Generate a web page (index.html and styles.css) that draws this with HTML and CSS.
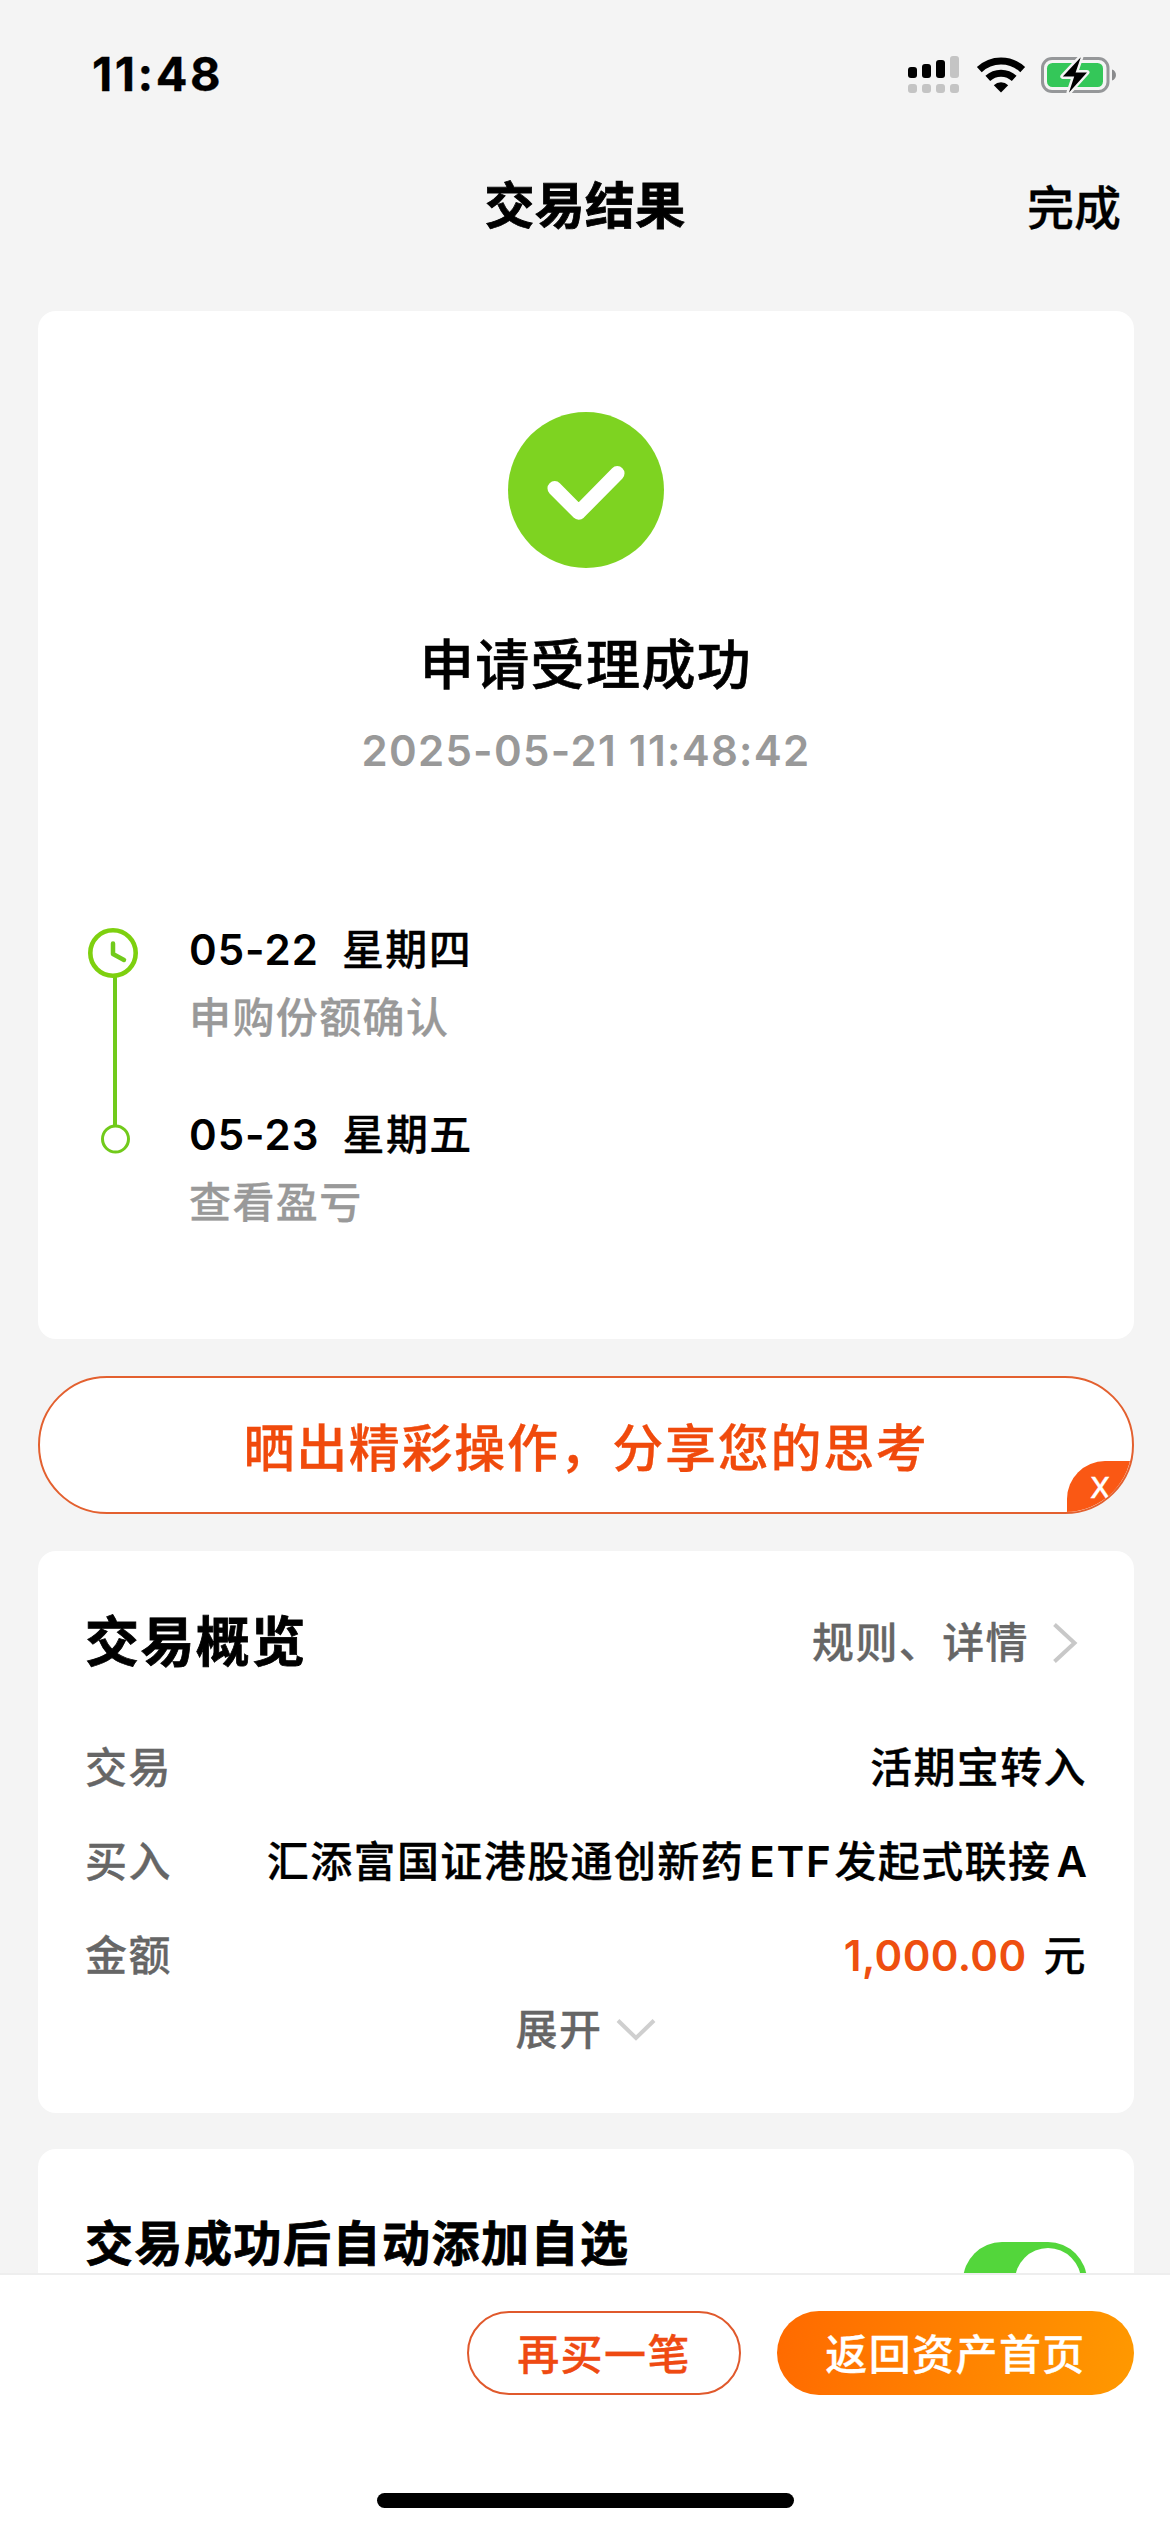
FILE: index.html
```html
<!DOCTYPE html>
<html lang="zh-CN">
<head>
<meta charset="utf-8">
<title>交易结果</title>
<link rel="stylesheet" href="styles.css">
</head>
<body>
<div class="screen">
  <header class="status-bar">
    <span class="clock">11:48</span>
    <div class="status-icons">
      <svg class="signal" width="52" height="38" viewBox="0 0 52 38">
        <g fill="#000"><rect x="0" y="11" width="9" height="11" rx="3"/><rect x="14" y="8" width="9" height="14" rx="3"/><rect x="28" y="4" width="9" height="18" rx="3"/></g>
        <g fill="#c4c4c4"><rect x="42" y="0" width="9" height="22" rx="3"/><rect x="0" y="28" width="9" height="9" rx="3"/><rect x="14" y="28" width="9" height="9" rx="3"/><rect x="28" y="28" width="9" height="9" rx="3"/><rect x="42" y="28" width="9" height="9" rx="3"/></g>
      </svg>
      <svg class="wifi" width="50" height="38" viewBox="0 0 50 38">
        <g fill="none" stroke="#000" stroke-width="7"><path d="M3.3 13.6a31.500 31.500 0 0 1 43.400 0"/><path d="M11.800 22.300a19.500 19.500 0 0 1 26.400 0"/></g>
        <path d="M25 36.500l-7.200-7.300a10.500 10.500 0 0 1 14.400 0z"/>
      </svg>
      <svg class="battery" width="76" height="40" viewBox="0 0 76 40">
        <rect x="1.500" y="3.500" width="65.500" height="33" rx="9.500" fill="none" stroke="#959799" stroke-width="3"/>
        <rect x="6" y="8" width="56" height="24" rx="5.500" fill="#34c759"/>
        <path d="M71 14.500c5.300 1.500 5.300 9.500 0 11z" fill="#8a8b8d"/>
        <path d="M39.800 2.200L21.800 21.500h11.400L28 37.400l18-20H34.600z" fill="#000" stroke="#f4f4f4" stroke-width="5" stroke-linejoin="round" paint-order="stroke"/>
      </svg>
    </div>
  </header>
  <nav class="nav-bar">
    <h1 class="nav-title">交易结果</h1>
    <a class="nav-done">完成</a>
  </nav>
  <main class="content">
    <section class="card result">
      <svg class="result-icon" width="156" height="156" viewBox="0 0 156 156">
        <circle cx="78" cy="78" r="78" fill="#7ed321"/>
        <path d="M46.700 76.300L70.700 100.500L109.300 61.300" fill="none" stroke="#fff" stroke-width="14.500" stroke-linecap="round" stroke-linejoin="round"/>
      </svg>
      <h2 class="result-title">申请受理成功</h2>
      <p class="result-time">2025-05-21 11:48:42</p>
      <div class="timeline">
        <svg class="timeline-rail" width="50" height="226" viewBox="0 0 50 226">
          <g fill="none" stroke="#71ca1b">
            <path d="M27 49V197" stroke-width="4"/>
            <circle cx="25" cy="25" r="22.700" stroke="#7ed00f" stroke-width="4.600"/>
            <path d="M25 15.500V26L36 32" stroke-width="4.500" stroke-linecap="round" stroke-linejoin="round"/>
            <circle cx="27.500" cy="211" r="13" stroke-width="3"/>
          </g>
        </svg>
        <ol class="steps">
          <li class="step"><div class="step-date"><span class="num">05-22</span><span>星期四</span></div><div class="step-note">申购份额确认</div></li>
          <li class="step"><div class="step-date"><span class="num">05-23</span><span>星期五</span></div><div class="step-note">查看盈亏</div></li>
        </ol>
      </div>
    </section>
    <div class="share">
      <span class="share-text">晒出精彩操作，分享您的思考</span>
      <span class="share-close">X</span>
    </div>
    <section class="card overview">
      <div class="overview-head">
        <h2 class="overview-title">交易概览</h2>
        <a class="overview-link">规则、详情
          <svg width="26" height="42" viewBox="0 0 26 42"><path d="M2.500 2.500L22.500 21L2.500 39.500" fill="none" stroke="#c8c8c8" stroke-width="4"/></svg>
        </a>
      </div>
      <dl class="rows">
        <div class="row"><dt>交易</dt><dd>活期宝转入</dd></div>
        <div class="row"><dt>买入</dt><dd class="fund">汇添富国证港股通创新药<span class="latin">ETF</span>发起式联接<span class="latin-end">A</span></dd></div>
        <div class="row"><dt>金额</dt><dd class="amount"><span class="amount-value">1,000.00</span><span>元</span></dd></div>
      </dl>
      <div class="expand">展开
        <svg width="40" height="24" viewBox="0 0 40 24"><path d="M2 2.500L20 20L38 2.500" fill="none" stroke="#cfcfcf" stroke-width="4"/></svg>
      </div>
    </section>
    <section class="card favorite">
      <h2 class="favorite-title">交易成功后自动添加自选</h2>
      <span class="toggle"><span class="knob"></span></span>
    </section>
  </main>
  <footer class="footer">
    <div class="actions">
      <button class="btn btn-outline">再买一笔</button>
      <button class="btn btn-primary">返回资产首页</button>
    </div>
    <div class="home-indicator"></div>
  </footer>
</div>
</body>
</html>
```
FILE: styles.css
```css
* { box-sizing: border-box; margin: 0; padding: 0; }
body {
  background: #f4f4f4;
  color: #000;
  font-family: Inter, "Noto Sans CJK SC", sans-serif;
  font-size: 42px;
  font-weight: 500;
  letter-spacing: 1.4px;
  line-height: 60px;
  -webkit-text-stroke: 0.3px;
}
.screen { width: 1170px; height: 2532px; display: flex; flex-direction: column; overflow: hidden; }

.status-bar { height: 148px; flex: none; display: flex; justify-content: space-between; align-items: center; padding: 0 53px 0 92px; }
.clock { font-size: 47px; font-weight: 700; letter-spacing: 2.5px; }
.status-icons { display: flex; align-items: center; padding-top: 1px; }
.wifi { margin-left: 16px; }
.battery { margin-left: 15px; }

.nav-bar { height: 163px; flex: none; display: grid; grid-template-columns: 1fr auto 1fr; align-items: start; padding: 28px 49px 0; }
.nav-title { grid-column: 2; font-size: 50px; font-weight: 700; letter-spacing: 0.3px; -webkit-text-stroke: 0.8px; }
.nav-done { justify-self: end; font-size: 47px; letter-spacing: 0; padding-top: 2px; }

.content { flex: 1; min-height: 0; overflow: hidden; padding: 0 36px 0 38px; display: flex; flex-direction: column; }
.card { background: #fff; border-radius: 18px; flex: none; }

.result { height: 1028px; padding: 101px 48px 0; display: flex; flex-direction: column; align-items: center; }
.result-icon { display: block; }
.result-title { font-size: 54px; font-weight: 500; margin-top: 68px; -webkit-text-stroke: 0.6px; }
.result-time { color: #999; font-size: 42px; font-weight: 600; letter-spacing: 1.3px; margin-top: 25px; -webkit-text-stroke: 0; }
.timeline { align-self: stretch; display: flex; gap: 51px; margin-top: 147px; padding-left: 2px; }
.timeline-rail { display: block; flex: none; }
.steps { list-style: none; display: flex; flex-direction: column; gap: 57px; margin-top: -8px; }
.step { display: flex; flex-direction: column; gap: 8px; }
.step-date { display: flex; gap: 23px; }
.num { font-weight: 600; letter-spacing: 1px; -webkit-text-stroke: 0; }
.step-note { color: #999; }

.share { height: 138px; flex: none; margin: 37px 0; border: 2px solid #e3602f; border-radius: 69px; background: #fff; display: flex; align-items: center; justify-content: center; position: relative; overflow: hidden; }
.share-text { color: #f04a0c; font-size: 51px; font-weight: 500; letter-spacing: 1.7px; padding-top: 7px; }
.share-close { position: absolute; right: 0; bottom: 0; width: 65px; height: 51px; padding-left: 23px; border-radius: 38px 0 0 0; background: #fa5814; color: #fff; font-size: 29px; font-weight: 500; line-height: 53px; letter-spacing: 0; }

.overview { height: 562px; padding: 62px 47px 0; }
.overview-head { display: flex; justify-content: space-between; align-items: center; padding-right: 9px; }
.overview-title { font-size: 54px; font-weight: 700; letter-spacing: 1.4px; -webkit-text-stroke: 0.8px; }
.overview-link { color: #666; display: flex; align-items: center; gap: 23px; }
.rows { margin-top: 65px; display: flex; flex-direction: column; gap: 34px; }
.row { display: flex; justify-content: space-between; }
.row dt { color: #666; }
.fund .latin { margin-left: 5px; margin-right: 2px; font-weight: 600; letter-spacing: 1.8px; -webkit-text-stroke: 0; }
.fund .latin-end { margin-left: 5px; font-weight: 600; letter-spacing: 0; -webkit-text-stroke: 0; }
.amount { display: flex; gap: 17px; }
.amount-value { color: #ee4f10; font-weight: 600; letter-spacing: 0.4px; -webkit-text-stroke: 0; }
.expand { color: #666; display: flex; justify-content: center; align-items: center; gap: 14px; margin-top: 14px; }

.favorite { height: 220px; margin-top: 36px; padding: 65px 47px 0; display: flex; justify-content: space-between; align-items: flex-start; }
.favorite-title { font-size: 48px; font-weight: 700; letter-spacing: 1.5px; -webkit-text-stroke: 0.8px; }
.toggle { width: 124px; height: 78px; margin-top: 28px; border-radius: 39px; background: #53d63b; padding: 6px; display: flex; justify-content: flex-end; }
.knob { width: 66px; height: 66px; border-radius: 50%; background: #fff; }

.footer { height: 259px; flex: none; background: #fff; border-top: 2px solid #eee; padding: 36px 36px 24px; display: flex; flex-direction: column; justify-content: space-between; align-items: center; }
.actions { align-self: stretch; display: flex; justify-content: flex-end; gap: 36px; }
.btn { height: 84px; border-radius: 42px; font: inherit; letter-spacing: inherit; display: flex; align-items: center; justify-content: center; padding-top: 4px; }
.btn-outline { width: 274px; background: #fff; border: 2px solid #e0592c; color: #ef4a12; }
.btn-primary { width: 357px; border: 0; background: linear-gradient(100deg, #ff6a00, #ff9900); color: #fff; }
.home-indicator { width: 417px; height: 15px; border-radius: 8px; background: #000; }
```
